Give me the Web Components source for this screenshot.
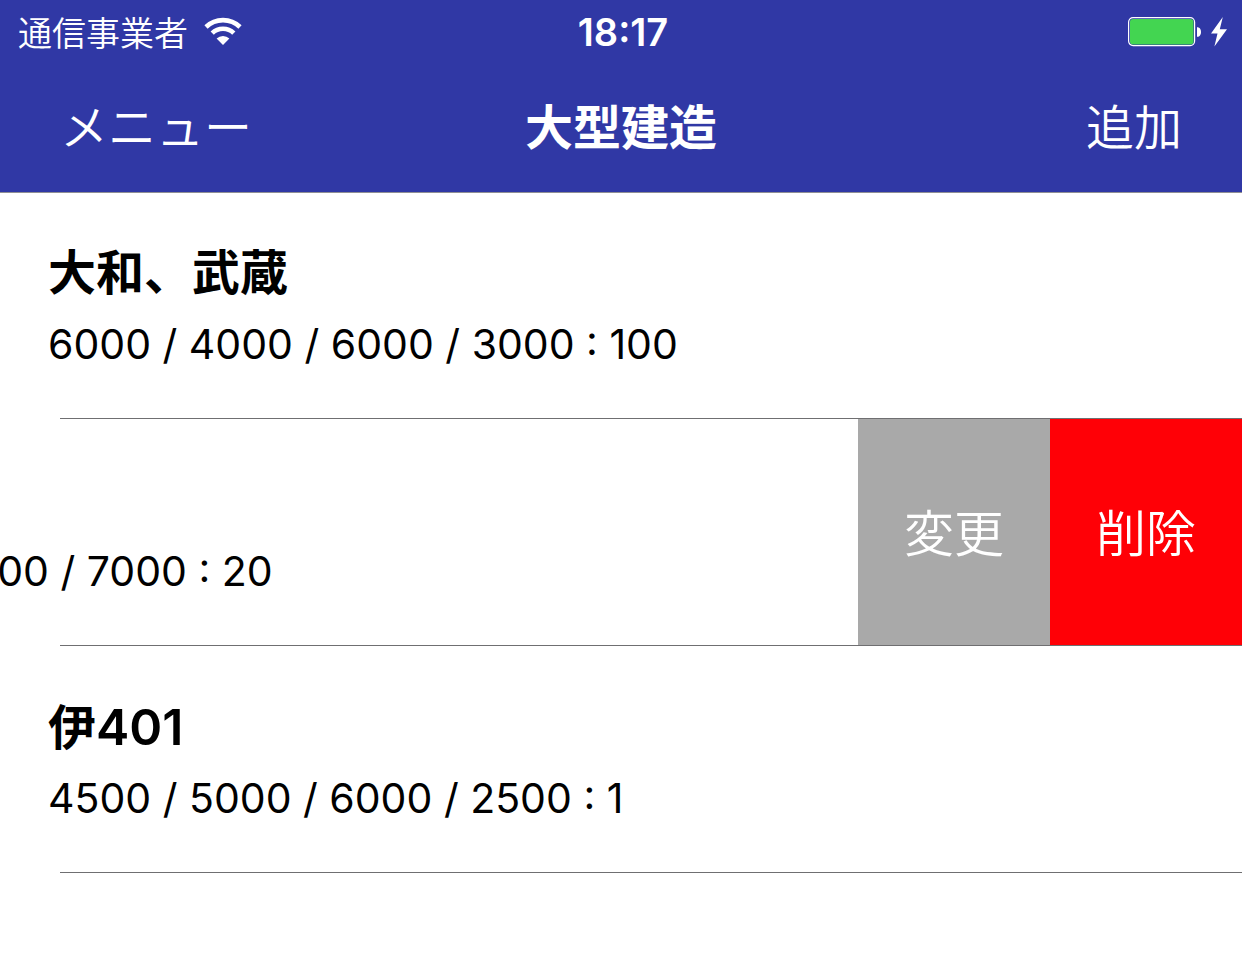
<!DOCTYPE html>
<html lang="ja">
<head>
<meta charset="utf-8">
<meta name="viewport" content="width=device-width, initial-scale=1">
<title>大型建造</title>
<style>
  html, body { margin: 0; min-height: 100%; background: #fff; }
  body { font-family: Inter, "Noto Sans CJK JP", sans-serif; color: #000; overflow-x: hidden; }
  .digits { font-size: 50px; }
</style>
</head>
<body>
<app-header>
  <status-bar slot="status" carrier="通信事業者" time="18:17"></status-bar>
  <nav-bar slot="nav">
    <nav-button slot="left">メニュー</nav-button>
    <span slot="title">大型建造</span>
    <nav-button slot="right">追加</nav-button>
  </nav-bar>
</app-header>
<recipe-list>
  <recipe-row>
    <span slot="name">大和、武蔵</span>
    <span slot="detail">6000 / 4000 / 6000 / 3000 : 100</span>
  </recipe-row>
  <recipe-row open>
    <span slot="detail">4000 / 2000 / 5000 / 7000 : 20</span>
    <row-action slot="actions">変更</row-action>
    <row-action slot="actions" danger>削除</row-action>
  </recipe-row>
  <recipe-row>
    <span slot="name">伊<span class="digits">401</span></span>
    <span slot="detail">4500 / 5000 / 6000 / 2500 : 1</span>
  </recipe-row>
</recipe-list>

<script>
const define = (name, html, setup) => {
  const template = document.createElement('template');
  template.innerHTML = html;
  customElements.define(name, class extends HTMLElement {
    constructor() {
      super();
      this.attachShadow({ mode: 'open' }).append(template.content.cloneNode(true));
    }
    connectedCallback() { if (setup) setup(this); }
  });
};

define('app-header', `
  <style>
    :host { display: block; position: relative; z-index: 1; background: #3038a5; color: #fff; box-shadow: 0 1px 0 #8f8f94; }
  </style>
  <header><slot name="status"></slot><slot name="nav"></slot></header>`);

define('status-bar', `
  <style>
    :host { display: grid; grid-template-columns: 1fr auto 1fr; align-items: center; height: 60px; padding: 0 14px 0 18px; }
    .left, .right { display: flex; align-items: center; }
    .left { gap: 16px; }
    .carrier { font-size: 34px; line-height: 60px; font-weight: 350; padding-top: 4px; }
    .time { font-size: 38px; line-height: 60px; font-weight: 600; }
    .right { justify-content: flex-end; gap: 8px; }
    svg { display: block; }
  </style>
  <div class="left">
    <span class="carrier"></span>
    <svg width="38" height="30" viewBox="0 0 38 30" aria-hidden="true">
      <g fill="none" stroke="#fff" stroke-width="4.6">
        <path d="M2 10A24.5 24.5 0 0 1 36 10"/>
        <path d="M8.2 16.2A15.4 15.4 0 0 1 29.8 16.2"/>
      </g>
      <path fill="#fff" d="M19 28L12.6 21.6A9.2 9.2 0 0 1 25.4 21.6Z"/>
    </svg>
  </div>
  <span class="time"></span>
  <div class="right">
    <svg width="74" height="30" viewBox="0 0 74 30" aria-hidden="true">
      <rect x=".6" y=".6" width="66" height="28" rx="4.5" fill="none" stroke="#fff" stroke-width="1.2"/>
      <rect x="2" y="2" width="63.5" height="25.5" rx="3" fill="#43d551"/>
      <path fill="#fff" d="M69 10.2C72 10.2 73 12.5 73 15S72 19.8 69 19.8Z"/>
    </svg>
    <svg width="18" height="30" viewBox="0 0 18 30" aria-hidden="true">
      <path fill="#fff" d="M12.8 0L1 16.5H7.5L4.4 29.5L17 12.2H9.8Z"/>
    </svg>
  </div>`, el => {
  el.shadowRoot.querySelector('.carrier').textContent = el.getAttribute('carrier');
  el.shadowRoot.querySelector('.time').textContent = el.getAttribute('time');
});

define('nav-bar', `
  <style>
    :host { display: grid; grid-template-columns: 1fr auto 1fr; align-items: center; height: 132px; padding: 4px 60px 0; box-sizing: border-box; }
    h1 { margin: 0; font-size: 48px; line-height: 72px; font-weight: 600; }
    .right { justify-self: end; }
  </style>
  <slot name="left"></slot>
  <h1><slot name="title"></slot></h1>
  <div class="right"><slot name="right"></slot></div>`);

define('nav-button', `
  <style>
    :host { display: block; }
    button { display: block; margin: 0; padding: 0; border: 0; background: none; color: inherit; font: 350 48px/72px Inter, "Noto Sans CJK JP", sans-serif; }
  </style>
  <button type="button"><slot></slot></button>`);

define('recipe-list', `
  <style>:host { display: block; }</style>
  <main><slot></slot></main>`);

define('recipe-row', `
  <style>
    :host { display: block; position: relative; overflow: hidden; }
    :host::after { content: ""; display: block; height: 1px; margin-left: 60px; background: #6f6f71; }
    .body { display: flex; height: 226px; }
    .text { flex: 0 0 100%; box-sizing: border-box; padding: 45px 48px 0; white-space: nowrap; }
    :host([open]) .text { margin-left: -384px; }
    h2 { margin: 0; height: 72px; font-size: 48px; line-height: 72px; font-weight: 600; }
    p { margin: 0; font-size: 41px; line-height: 70px; }
    .actions { display: flex; flex: none; }
  </style>
  <div class="body">
    <div class="text"><h2><slot name="name"></slot></h2><p><slot name="detail"></slot></p></div>
    <div class="actions"><slot name="actions"></slot></div>
  </div>`);

define('row-action', `
  <style>
    :host { display: flex; width: 192px; background: #a9a9a9; color: #fff; }
    :host([danger]) { background: #ff0006; }
    button { flex: 1; margin: 0; padding: 4px 0 0; border: 0; background: none; color: inherit; font: 350 50px/72px Inter, "Noto Sans CJK JP", sans-serif; }
  </style>
  <button type="button"><slot></slot></button>`);
</script>
</body>
</html>
